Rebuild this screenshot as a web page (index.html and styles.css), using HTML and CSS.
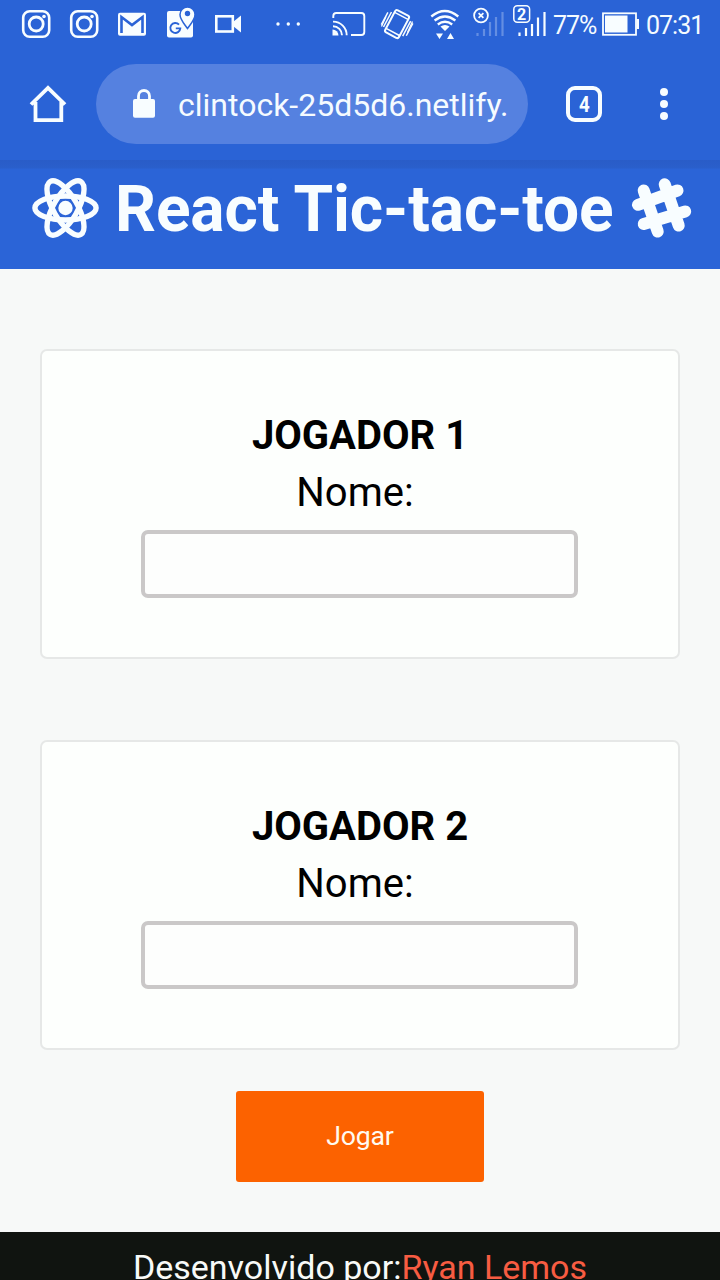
FILE: index.html
```html
<!DOCTYPE html>
<html lang="pt-BR">
<head>
<meta charset="utf-8">
<title>React Tic-tac-toe</title>
<link rel="stylesheet" href="styles.css">
</head>
<body>
<div class="screen">
  <div class="status-bar">
    <svg class="ico" width="60" height="48" viewBox="0 0 60 48"><rect x="23.2" y="11.2" width="26" height="25.6" rx="6.5" stroke-width="2.6"/><circle cx="36.2" cy="24" r="7" stroke-width="2.8"/><circle class="solid" cx="44" cy="16.5" r="1.8"/></svg>
    <svg class="ico" width="48" height="48" viewBox="12 0 48 48"><rect x="23.2" y="11.2" width="26" height="25.6" rx="6.5" stroke-width="2.6"/><circle cx="36.2" cy="24" r="7" stroke-width="2.8"/><circle class="solid" cx="44" cy="16.5" r="1.8"/></svg>
    <svg class="ico" width="48" height="48" viewBox="108 0 48 48"><rect class="solid" x="118" y="12.700" width="28" height="23" rx="2"/><path class="cut" stroke-width="2.600" d="M121.500 33V17l10.500 8 10.500-8v16"/></svg>
    <svg class="ico" width="49" height="48" viewBox="156 0 49 48"><rect class="solid" x="167" y="11" width="26" height="26.500" rx="2"/><path class="cut" stroke-width="1.900" d="M179 24.600a5 5 0 1 0 1.300 3.800h-4.500"/><path class="pin" d="M187.500 28.500c-3.500-5-7.500-9-7.500-14a7.500 7.500 0 0 1 15 0c0 5-4 9-7.500 14z"/><circle class="dot-cut" cx="187.500" cy="13.500" r="2.700"/></svg>
    <svg class="ico" width="55" height="48" viewBox="205 0 55 48"><rect x="216.300" y="16.300" width="16.500" height="15.200" stroke-width="2.600"/><path class="solid" d="M233 22l8-6.500v17L233 26z"/></svg>
    <svg class="ico" width="60" height="48" viewBox="260 0 60 48"><g class="solid"><circle cx="278" cy="24" r="1.700"/><circle cx="288.300" cy="24" r="1.700"/><circle cx="298.300" cy="24" r="1.700"/></g></svg>
    <svg class="ico" width="53" height="48" viewBox="320 0 53 48"><path stroke-width="1.900" d="M333.300 18v-2a3 3 0 0 1 3-3h25a3 3 0 0 1 3 3v16a3 3 0 0 1-3 3H351M333 21.600a13.500 13.500 0 0 1 13.700 13.700M333 26.200a9 9 0 0 1 9 9"/><path class="solid" d="M332.500 29.500a6 6 0 0 1 6 6h-6z"/></svg>
    <svg class="ico" width="50" height="48" viewBox="373 0 50 48"><g transform="rotate(28 397 24)"><rect x="389.300" y="11.500" width="15.500" height="25" rx="2" stroke-width="2"/><path stroke-width="1.500" d="M389.500 14.800h15M389.500 33h15M386.500 16v17M383.500 18v14M407.700 15v17M410.700 16v14"/></g><path stroke-width="1.300" d="M381.500 26.500l4.500-10M412.500 21.500l-5 11"/></svg>
    <svg class="ico" width="45" height="48" viewBox="423 0 45 48"><path stroke-width="2.300" d="M431.300 16.500q13.500-11 27 0M434.600 20.500q10.400-8 20.800 0M437.800 24.500q7.200-5.500 14.400 0"/><path class="solid" d="M440.500 26.500q4.500-3 9 0L445 31zM436 33.500h7l-3.500 5.500zM447 39l3.500-6 3.500 6z"/></svg>
    <svg class="ico" width="40" height="48" viewBox="468 0 40 48"><path class="faint" stroke-width="2.200" d="M477.500 36v-3M484 36v-7M490 36V22M496 36V17M502.500 36V12"/><circle cx="481" cy="15.500" r="6.900" stroke-width="1.800"/><path stroke-width="1.700" d="M478.600 13.100l4.800 4.800M483.400 13.100l-4.800 4.800"/></svg>
    <svg class="ico" width="42" height="48" viewBox="508 0 42 48"><path stroke-width="2.200" d="M519.500 36v-3.500M526 36v-8M532 36V24M538 36V17.500M544.500 36V12"/><rect class="badge" x="513.800" y="5.800" width="15.800" height="16.500" rx="3.500" stroke-width="1.500"/><text class="sim" x="521.700" y="19.500">2</text></svg>
    <span class="percent">77%</span>
    <svg class="ico" width="46" height="48" viewBox="600 0 46 48"><rect x="603" y="13.300" width="33" height="21.500" stroke-width="1.800"/><path class="solid" d="M605 15.500h22.500v17H605zM636.500 19h2.500v10h-2.500z"/></svg>
    <span class="clock">07:31</span>
  </div>
  <div class="toolbar">
    <svg class="ico" width="96" height="80" viewBox="0 64 96 80"><path stroke-width="3.800" d="M31 104.500L48 88l17 16.500M35.500 102v18.200h25.800V102"/></svg>
    <div class="address">
      <svg class="ico" width="82" height="80" viewBox="96 64 82 80"><rect class="solid" x="133" y="99" width="22" height="18.700" rx="2"/><path stroke-width="2.800" d="M138.500 100v-4a5.500 5.500 0 0 1 11 0v4"/></svg>
      <span>clintock-25d5d6.netlify.</span>
    </div>
    <div class="tabs"><span>4</span></div>
    <svg class="ico" width="30" height="80" viewBox="649 64 30 80"><g class="solid"><circle cx="664" cy="92" r="4"/><circle cx="664" cy="104" r="4"/><circle cx="664" cy="116" r="4"/></g></svg>
  </div>
  <header class="page-header">
    <svg class="ico" width="70" height="70" viewBox="30 173 70 70"><g stroke-width="5.400"><ellipse cx="65.500" cy="208" rx="30.600" ry="12"/><ellipse cx="65.500" cy="208" rx="30.600" ry="12" transform="rotate(60 65.500 208)"/><ellipse cx="65.500" cy="208" rx="30.600" ry="12" transform="rotate(120 65.500 208)"/></g><circle class="solid" cx="65.500" cy="208" r="7.200"/></svg>
    <h1>React Tic-tac-toe</h1>
    <svg class="ico hash" width="66" height="70" viewBox="628 173 66 70"><path stroke-width="12" stroke-linecap="round" d="M643.700 190.500l14 41M664.700 184.300l14 41.200M638 204.800l39.500-14.300M643.700 224l41.500-12.600"/></svg>
  </header>
  <main class="players">
    <section class="card"><h2>JOGADOR 1</h2><label for="p1">Nome:</label><input id="p1" type="text"></section>
    <section class="card"><h2>JOGADOR 2</h2><label for="p2">Nome:</label><input id="p2" type="text"></section>
    <button class="play" type="button">Jogar</button>
  </main>
  <footer class="footer">Desenvolvido por:<a>Ryan Lemos</a></footer>
</div>
</body>
</html>
```

FILE: styles.css
```css
* { box-sizing: border-box; }
body { margin: 0; font-family: Roboto, "Liberation Sans", sans-serif; background: #f7f9f8; overflow: hidden; }
.screen { width: 720px; height: 1280px; display: flex; flex-direction: column; overflow: hidden; }
.status-bar { height: 48px; flex: none; display: flex; background: #2a63d6; color: #f5fbff; font-size: 25px; line-height: 51px; white-space: nowrap; }
.ico { display: block; flex: none; fill: none; stroke: #f8fdff; }
.ico .solid { fill: #f8fdff; stroke: none; }
.ico .cut { stroke: #2a63d6; }
.ico .dot-cut { fill: #2a63d6; stroke: none; }
.ico .pin { fill: #f8fdff; stroke: #2a63d6; stroke-width: 1.5; }
.ico .faint { stroke: #648ee2; }
.ico .badge { fill: #2a63d6; }
.ico .sim { fill: #f8fdff; stroke: none; font-size: 16px; font-weight: 700; text-anchor: middle; }
.percent { width: 50px; padding-left: 3px; letter-spacing: -1px; }
.clock { letter-spacing: -1px; }
.toolbar { height: 112px; flex: none; display: flex; padding-top: 16px; background: #2a63d6; }
.address { width: 432px; height: 80px; display: flex; border-radius: 40px; background: #5581e0; color: #f5fbff; font-size: 32px; line-height: 82px; white-space: nowrap; }
.tabs { width: 36px; height: 36px; margin: 22px 47px 0 38px; border: 4px solid #f8fdff; border-radius: 9px; color: #f8fdff; font-size: 22px; font-weight: 700; line-height: 29px; text-align: center; }
.tabs span { display: inline-block; transform: scaleX(0.85); }
.page-header { height: 109px; flex: none; display: flex; align-items: flex-start; padding: 13px 0 0 30px; background: linear-gradient(#295cc7, #2a5fcb 8px, #2b64d7 9px); color: #f8fdff; }
h1 { width: 496px; margin: -1px 0 0 15px; font-size: 64px; line-height: 75px; letter-spacing: -0.1px; white-space: nowrap; }
.hash { margin-left: 17px; }
.players { height: 963px; flex: none; display: flex; flex-direction: column; align-items: center; padding-top: 80px; }
.card { width: 640px; height: 310px; flex: none; display: flex; flex-direction: column; align-items: center; padding-top: 56px; margin-bottom: 81px; border: 2px solid #e6e8e7; border-radius: 7px; background: #fdfffd; }
.card + .card { margin-bottom: 41px; }
h2 { margin: 0; font-size: 40px; line-height: 57px; }
label { padding-right: 10px; font-size: 40px; line-height: 57px; }
input { width: 437px; height: 68px; margin: 9px 1px 0 0; border: 4px solid #cac8c8; border-radius: 7px; background: #fdfefd; outline: none; }
.play { width: 248px; height: 91px; flex: none; padding: 0; border: 0; border-radius: 3px; background: #fc6200; color: #fffaf0; font: 26.67px/91px Roboto, sans-serif; letter-spacing: -0.2px; }
.footer { height: 48px; flex: none; background: #101410; color: #f8faf8; font-size: 34px; line-height: 70px; text-align: center; white-space: nowrap; overflow: hidden; }
.footer a { color: #f75c42; }
```
